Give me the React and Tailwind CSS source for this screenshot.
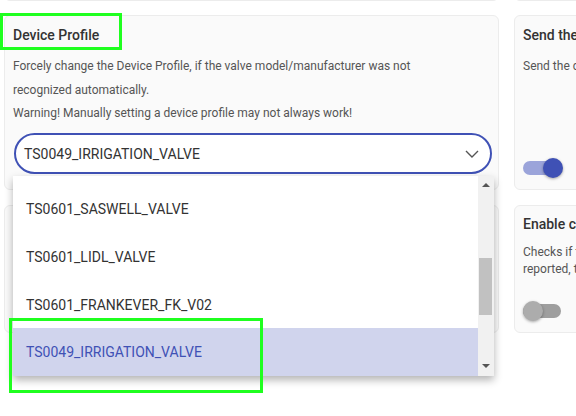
import React from "react";

const profiles = [
  { name: "TS0601_GIEX_VALVE", selected: false },
  { name: "TS0601_SASWELL_VALVE", selected: false },
  { name: "TS0601_LIDL_VALVE", selected: false },
  { name: "TS0601_FRANKEVER_FK_V02", selected: false },
  { name: "TS0049_IRRIGATION_VALVE", selected: true },
];

const Toggle = ({ on }) => (
  <div className="relative h-5 w-[40px] flex items-center">
    <div className={`h-[14px] w-[38px] rounded-full ${on ? "bg-[#9ba4da]" : "bg-[#9e9e9e]"}`} />
    <div
      className={`absolute top-0 h-5 w-5 rounded-full shadow-[0_1px_3px_rgba(0,0,0,0.35)] ${
        on ? "left-[20px] bg-[#3f51b5]" : "left-0 bg-[#acacac]"
      }`}
    />
  </div>
);

const App = () => {
  return (
    <div className="relative w-[576px] h-[416px] overflow-hidden bg-white font-['Roboto',sans-serif]">
      <div className="grid grid-cols-[495px_495px] gap-x-[15px] pl-1 -mt-[10px]">
        {/* cards cut off at the top */}
        <div className="h-[11px] rounded-b-md border border-t-0 border-[#ececec] bg-[#fafafa]" />
        <div className="h-[11px] rounded-b-md border border-t-0 border-[#ececec] bg-[#fafafa]" />
      </div>

      <div className="grid grid-cols-[495px_495px] gap-[15px] pl-1 mt-[14px]">
        {/* Device Profile */}
        <div className="h-[175px] rounded-md border border-[#ececec] bg-[#fafafa] px-2 pt-[9px]">
          <div className="text-sm leading-5 font-medium text-[#333]">Device Profile</div>
          <div className="mt-[9px] text-xs text-[#555] leading-6">
            <div>Forcely change the Device Profile, if the valve model/manufacturer was not</div>
            <div>recognized automatically.</div>
            <div className="-mt-px">Warning! Manually setting a device profile may not always work!</div>
          </div>
          <div className="relative mt-[8px] ml-px w-[478px]">
            <div className="flex h-[41px] items-center justify-between rounded-full border-2 border-[#3f51b5] bg-white pl-[8px] pr-[10px]">
              <span className="text-sm text-[#333]">TS0049_IRRIGATION_VALVE</span>
              <svg width="14" height="8" viewBox="0 0 14 8" className="mr-[1px]">
                <polyline points="1,1 7,7 13,1" fill="none" stroke="#555" strokeWidth="1.4" />
              </svg>
            </div>

            {/* open dropdown */}
            <div className="absolute left-[-1px] top-[43px] z-10 flex h-[200px] w-[481px] overflow-hidden bg-white shadow-[0_4px_8px_rgba(0,0,0,0.3)]">
              <div className="flex-1 overflow-hidden">
                <div className="-mt-[39px]">
                  {profiles.map((p) => (
                    <div
                      key={p.name}
                      className={`flex h-12 items-center pl-[13px] text-sm ${
                        p.selected ? "bg-[#d0d4ed] text-[#3f51b5] -mt-px pb-px" : "text-[#333]"
                      }`}
                    >
                      {p.name}
                    </div>
                  ))}
                </div>
              </div>
              <div className="relative w-4 bg-[#f1f1f1]">
                <div className="absolute left-[4px] top-[7px] h-0 w-0 border-x-4 border-b-4 border-x-transparent border-b-[#555]" />
                <div className="absolute left-px top-[82px] h-[57px] w-[13px] bg-[#c1c1c1]" />
                <div className="absolute left-[4px] bottom-[8px] h-0 w-0 border-x-4 border-t-4 border-x-transparent border-t-[#555]" />
              </div>
            </div>
          </div>
        </div>

        {/* Send the ... */}
        <div className="flex h-[175px] flex-col rounded-md border border-[#ececec] bg-[#fafafa] px-2 pt-[9px] pb-[11px]">
          <div className="text-sm leading-5 font-medium text-[#333] whitespace-nowrap">Send the current state</div>
          <div className="mt-[9px] text-xs leading-6 text-[#555] whitespace-nowrap">Send the current state to the device</div>
          <div className="mt-auto">
            <Toggle on />
          </div>
        </div>

        {/* second row left (hidden under the menu) */}
        <div className="h-[128px] rounded-md border border-[#ececec] bg-[#fafafa] px-2 pt-[9px]" />

        {/* Enable ... */}
        <div className="flex h-[128px] flex-col rounded-md border border-[#ececec] bg-[#fafafa] px-2 pt-[8px] pb-[11px]">
          <div className="text-sm leading-5 font-medium text-[#333] whitespace-nowrap">Enable consistency check</div>
          <div className="mt-[10px] text-xs leading-[17px] text-[#555] whitespace-nowrap">
            <div>Checks if the device state is</div>
            <div>reported, then retries</div>
          </div>
          <div className="mt-auto">
            <Toggle on={false} />
          </div>
        </div>
      </div>

      {/* green annotation frames */}
      <div className="pointer-events-none absolute left-0 top-[13px] h-[37px] w-[122px] border-[3px] border-[#1fff1f]" />
      <div className="pointer-events-none absolute left-[9px] top-[318px] z-20 h-[75px] w-[254px] border-[3px] border-[#1fff1f]" />
    </div>
  );
};

export default App;
